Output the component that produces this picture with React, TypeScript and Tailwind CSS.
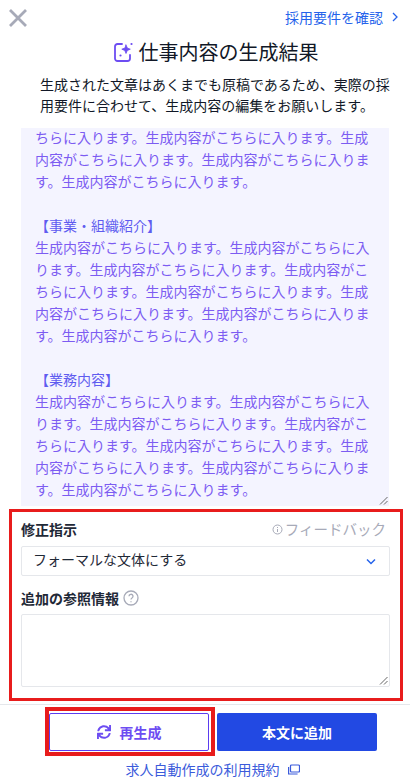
import { FaSync } from "react-icons/fa";

const jp = "font-['Noto_Sans_CJK_JP','Noto_Sans',sans-serif]";

function Para({ lines, head }: { lines: string[]; head?: boolean }) {
  return (
    <>
      {lines.map((l, i) => (
        <div key={i} className={`h-[22px] whitespace-nowrap ${head && i === 0 ? "text-[#5f5cf0]" : ""}`}>{l || "\u00a0"}</div>
      ))}
    </>
  );
}

function Grip() {
  return (
    <svg className="absolute right-[1px] bottom-[1px]" width="9" height="9" viewBox="0 0 9 9" fill="none" stroke="#666" strokeWidth="1">
      <path d="M1 8.500 8.500 1M5 8.500 8.500 5" />
    </svg>
  );
}

export default function App() {
  const body = [
    "生成内容がこちらに入ります。生成内容がこちらに入",
    "ります。生成内容がこちらに入ります。生成内容がこ",
    "ちらに入ります。生成内容がこちらに入ります。生成",
    "内容がこちらに入ります。生成内容がこちらに入りま",
    "す。生成内容がこちらに入ります。",
  ];
  return (
    <div className={`w-[410px] h-[782px] bg-white overflow-hidden flex flex-col ${jp}`}>
      <div className="h-[37px] flex items-start justify-between pl-[8px] pr-[11px] pt-[8px]">
        <svg width="20" height="20" viewBox="0 0 20 20" fill="none" stroke="#a7aab8" strokeWidth="2.800">
          <path d="M2 2 18 18M18 2 2 18" />
        </svg>
        <div className="flex items-center gap-[9px] text-[14px] leading-[18px] text-[#2563eb]">
          <span>採用要件を確認</span>
          <svg width="7" height="10" viewBox="0 0 7 10" fill="none" stroke="#2563eb" strokeWidth="1.300">
            <path d="M1 1l4 4-4 4" />
          </svg>
        </div>
      </div>
      <div className="h-[30px] pl-[22px] flex items-center justify-center gap-[5px]">
        <svg width="20" height="20" viewBox="0 0 20 20" fill="none" stroke="#6d4df2" strokeWidth="1.800" strokeLinecap="round" strokeLinejoin="round">
          <path d="M8 2H3.500A2.500 2.500 0 0 0 1 4.500v12A2.500 2.500 0 0 0 3.500 19h10a2.500 2.500 0 0 0 2.500-2.500V13" />
          <path d="M12 3l1.300 3 3 1.200-3 1.300-1.300 3-1.200-3-3-1.300 3-1.200z" fill="#6d4df2" strokeWidth="0.800" />
          <path d="M6.500 13.500h.01M17.500 2h.01" strokeWidth="2.200" />
        </svg>
        <h1 className="text-[20px] leading-[30px] font-normal text-[#111827]">仕事内容の生成結果</h1>
      </div>
      <div className="mt-[7px] h-[54px] text-[14px] leading-[21px] text-center text-[#111827] px-[40px] whitespace-nowrap">
        <div>生成された文章はあくまでも原稿であるため、実際の採</div>
        <div>用要件に合わせて、生成内容の編集をお願いします。</div>
      </div>
      <div className="relative mx-[21px] h-[378px] bg-[#f4f4ff] px-[14px] text-[14px] text-[#7c5cf2] overflow-hidden">
        <div className="-mt-[1px]">
          <Para lines={["ちらに入ります。生成内容がこちらに入ります。生成", "内容がこちらに入ります。生成内容がこちらに入りま", "す。生成内容がこちらに入ります。", ""]} />
          <Para head lines={["【事業・組織紹介】", ...body, ""]} />
          <Para head lines={["【業務内容】", ...body]} />
        </div>
        <Grip />
      </div>
      <div className="mt-[3px] ml-[9px] w-[394px] h-[192px] border-[3px] border-[#e81c1c] pl-[9px] pr-[10px] pt-[5px]">
        <div className="flex items-center justify-between h-[24px]">
          <span className="text-[14px] font-bold text-[#1f2937]">修正指示</span>
          <span className="flex items-center gap-[2px] text-[14.500px] text-[#a7aab8] mr-[4px]">
            <svg width="11" height="11" viewBox="0 0 11 11" fill="none" stroke="#a7aab8">
              <circle cx="5.500" cy="5.500" r="4.500" />
              <path d="M5.500 5v3M5.500 3v1" />
            </svg>
            フィードバック
          </span>
        </div>
        <div className="mt-[5px] h-[30px] border border-[#e5e7eb] rounded-[2px] flex items-center justify-between pl-[11px] pr-[13px] text-[14px] text-[#1f2937]">
          <span className="-mt-[3px]">フォーマルな文体にする</span>
          <svg width="10" height="7" viewBox="0 0 10 7" fill="none" stroke="#2563eb" strokeWidth="1.500">
            <path d="M1 1.500 5 5.500l4-4" />
          </svg>
        </div>
        <div className="mt-[10px] h-[24px] flex items-center gap-[4px]">
          <span className="text-[14px] font-bold text-[#1f2937]">追加の参照情報</span>
          <svg width="16" height="16" viewBox="0 0 16 16" fill="none" stroke="#a7aab8" strokeWidth="1.300">
            <circle cx="8" cy="8" r="7" />
            <path d="M6 6.300a2 2 0 1 1 3 1.700c-.7.400-1 .8-1 1.500M8 11.200v1" />
          </svg>
        </div>
        <div className="relative mt-[4px] h-[73px] border border-[#e5e7eb] rounded-[2px]">
          <Grip />
        </div>
      </div>
      <div className="mt-[3px] border-t border-[#e5e7eb] flex pl-[45px] pr-[33px] pt-[2px] gap-[2px]">
        <div className="w-[170px] h-[49px] border-[4px] border-[#e81c1c] flex">
          <button className="mt-[2px] w-[160px] h-[38px] border border-[#5b3df0] rounded-[2px] flex items-center justify-center gap-[9px] text-[#6d4df2] text-[14px] font-bold">
            <FaSync size={14} color="#6d4df2" />
            再生成
          </button>
        </div>
        <button className="mt-[6px] w-[160px] h-[38px] rounded-[2px] bg-[#2249e3] text-white text-[14px] font-bold">本文に追加</button>
      </div>
      <div className="mt-[3px] pl-[15px] flex items-center justify-center gap-[8px] text-[14px] leading-[20px] text-[#3b5bdb]">
        <span>求人自動作成の利用規約</span>
        <svg width="12" height="11" viewBox="0 0 12 11" fill="none" stroke="#3b5bdb" strokeWidth="1.200">
          <rect x="2.500" y="1" width="9" height="7" rx="1" />
          <path d="M.600 3v7h9" />
        </svg>
      </div>
    </div>
  );
}
